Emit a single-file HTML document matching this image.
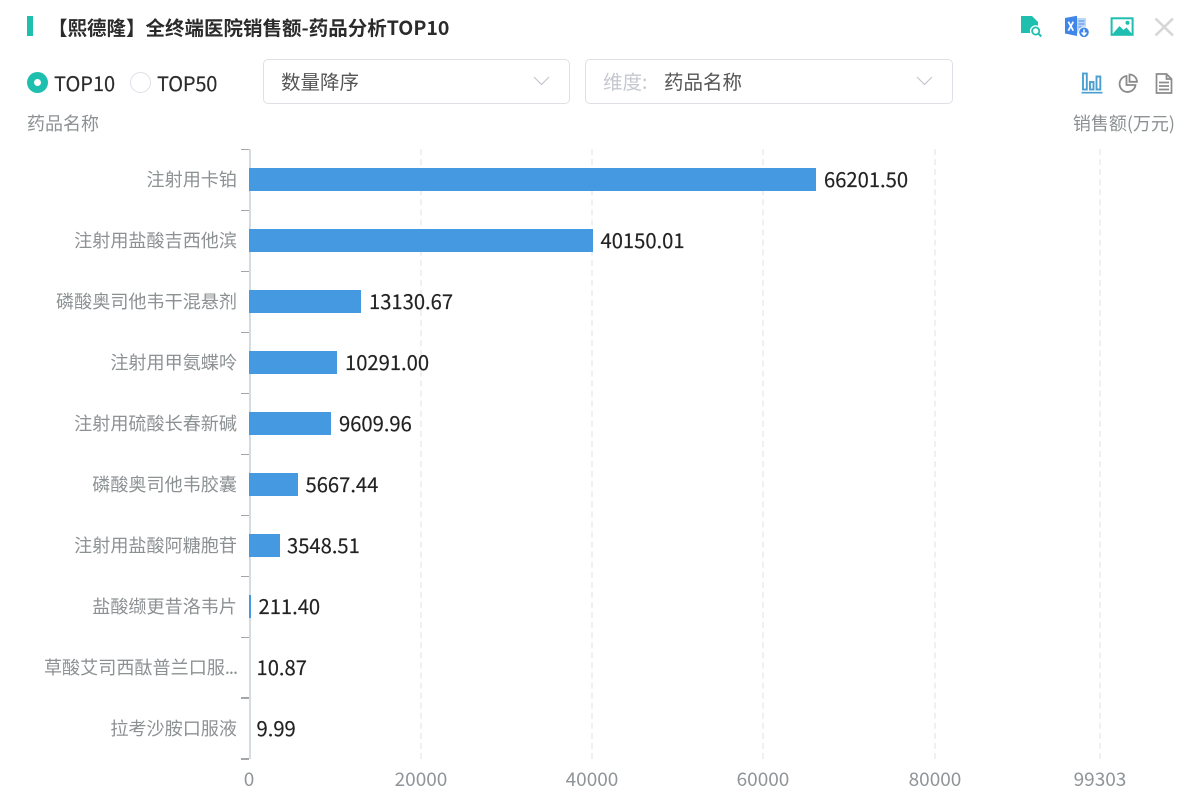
<!DOCTYPE html>
<html><head><meta charset="utf-8">
<style>
html,body{margin:0;padding:0;background:#fff}
#p{position:relative;width:1188px;height:804px;overflow:hidden;background:#fff;font-family:"Noto Sans CJK SC","Liberation Sans",sans-serif}
.t{position:absolute;white-space:nowrap;line-height:28px;height:28px}
.l{font-size:18.1px;color:#8c9193;right:951px;text-align:right}
.v{font-size:20.2px;color:#222;-webkit-text-stroke:.15px #222}
.a{font-size:19px;color:#8e9497;top:765px;text-align:center;width:80px}
.b{position:absolute;left:249px;height:22.5px;background:#4499e0}
.g{position:absolute;top:149px;height:610px;width:0;border-left:2px dashed #eef1f3}
.k{position:absolute;left:241px;width:8px;height:1.5px;background:#a3a5a6}
.s{position:absolute;background:#fff;border:1px solid #dfe0e6;border-radius:5px;box-sizing:border-box;top:59px;height:45px}
svg{position:absolute;overflow:visible}
</style></head><body><div id="p">
<div style="position:absolute;left:27px;top:16px;width:6px;height:20px;background:#1fbfb0"></div>
<div class="t" style="left:48px;top:12.500px;font-size:19.5px;font-weight:700;color:#2b2b2b">【熙德隆】全终端医院销售额-药品分析TOP10</div>

<svg style="left:1020px;top:15px" width="24" height="24" viewBox="0 0 24 24"><path d="M1 1h11l6 6v11H1z" fill="#1fbfb0"/><circle cx="15.700" cy="16" r="5.800" fill="#fff"/><circle cx="15.700" cy="16" r="3.600" fill="none" stroke="#1fbfb0" stroke-width="1.800"/><path d="M18.300 18.500l3 3" stroke="#1fbfb0" stroke-width="2"/></svg>
<svg style="left:1064px;top:15px" width="26" height="24" viewBox="0 0 26 24"><path d="M1 3L13 .7V21L1 18.500z" fill="#3f86e8"/><path d="M13 3h9v15h-9z" fill="#bcd6f7"/><path d="M14.500 6h6M14.500 9h6M14.500 12h6M14.500 15h4" stroke="#4a8fe8" stroke-width="1"/><path d="M4.300 6.700l5 9M9.300 6.700l-5 9" stroke="#fff" stroke-width="1.700"/><circle cx="20" cy="17.300" r="5.300" fill="#3f86e8" stroke="#fff" stroke-width="1"/><path d="M20 14.300v5.500M17.600 17.500l2.400 2.600 2.400-2.600" stroke="#fff" stroke-width="1.500" fill="none"/></svg>
<svg style="left:1110px;top:17px" width="24" height="20" viewBox="0 0 24 20"><rect x="1.600" y="1.300" width="21" height="16.500" fill="#fff" stroke="#1fbfb0" stroke-width="2"/><path d="M2.500 17l7-8 4 4 3-2.500 5.500 6.500z" fill="#1fbfb0"/><circle cx="17.500" cy="5.800" r="2" fill="#1fbfb0"/></svg>
<svg style="left:1154px;top:17px" width="20" height="20" viewBox="0 0 20 20"><path d="M1.500 1.500l17.500 17M19 1.500L1.500 18.500" stroke="#d6d6d6" stroke-width="2.600"/></svg>

<div style="position:absolute;left:27px;top:72px;width:21px;height:21px;border-radius:50%;background:#1fbfb0"></div>
<div style="position:absolute;left:34px;top:79px;width:7px;height:7px;border-radius:50%;background:#fff"></div>
<div class="t" style="left:54px;top:69px;font-size:20px;color:#2b2b2b;-webkit-text-stroke:.15px #2b2b2b">TOP10</div>
<div style="position:absolute;left:130px;top:72px;width:21px;height:21px;border-radius:50%;border:1px solid #dfe0e8;box-sizing:border-box"></div>
<div class="t" style="left:157px;top:69px;font-size:20px;letter-spacing:-.2px;color:#2b2b2b;-webkit-text-stroke:.15px #2b2b2b">TOP50</div>

<div class="s" style="left:263px;width:307px"></div>
<div class="t" style="left:281px;top:66.500px;font-size:19.5px;color:#555">数量降序</div>
<svg style="left:533px;top:76px" width="17" height="10" viewBox="0 0 17 10"><path d="M1 1l7.500 7.500L16 1" fill="none" stroke="#c4c7cf" stroke-width="1.200"/></svg>
<div class="s" style="left:585px;width:368px"></div>
<div class="t" style="left:603px;top:66.500px;font-size:19.5px;color:#c5c8d0">维度:</div>
<div class="t" style="left:664px;top:66.500px;font-size:19.5px;color:#555">药品名称</div>
<svg style="left:916px;top:76px" width="17" height="10" viewBox="0 0 17 10"><path d="M1 1l7.500 7.500L16 1" fill="none" stroke="#c4c7cf" stroke-width="1.200"/></svg>

<svg style="left:1080px;top:70px" width="24" height="24" viewBox="0 0 24 24"><g fill="none" stroke="#4a9fd0" stroke-width="1.900"><rect x="3" y="3.500" width="3.800" height="16"/><rect x="10" y="12" width="3.500" height="7.500"/><rect x="16.500" y="6.500" width="3.800" height="13"/></g><path d="M1.500 22.700h21" stroke="#4a9fd0" stroke-width="1.600"/></svg>
<svg style="left:1118px;top:73px" width="20" height="20" viewBox="0 0 20 20"><g fill="none" stroke="#8b8b8b" stroke-width="1.800"><path d="M8.500 3a8 8 0 1 0 9 9h-9z"/><path d="M11.500 1.500v7.300H19A7.500 7.500 0 0 0 11.500 1.500z"/></g></svg>
<svg style="left:1155px;top:73px" width="18" height="21" viewBox="0 0 18 21"><g fill="none" stroke="#8b8b8b" stroke-width="1.700"><path d="M1.500 1h10l5 5v14h-15z"/><path d="M11.500 1v5h5M4 9.500h10M4 13h10M4 16.500h10"/></g></svg>

<div class="t" style="left:27px;top:109px;font-size:18px;color:#8c9193">药品名称</div>
<div class="t" style="right:13px;top:109px;font-size:18px;color:#8c9193">销售额(万元)</div>

<div class="g" style="left:420px"></div><div class="g" style="left:591px"></div><div class="g" style="left:762px"></div><div class="g" style="left:934px"></div><div class="g" style="left:1099px"></div>
<div style="position:absolute;left:249px;top:149px;width:1.500px;height:610px;background:#d5dcdf"></div>
<div class="k" style="top:148.500px"></div><div class="k" style="top:209.500px"></div><div class="k" style="top:270.500px"></div><div class="k" style="top:331.500px"></div><div class="k" style="top:392.500px"></div><div class="k" style="top:453.500px"></div><div class="k" style="top:514.500px"></div><div class="k" style="top:575.500px"></div><div class="k" style="top:636.500px"></div><div class="k" style="top:697px"></div><div class="k" style="top:758px"></div>

<div class="b" style="top:168px;width:567px"></div>
<div class="b" style="top:229px;width:344px"></div>
<div class="b" style="top:290px;width:112px"></div>
<div class="b" style="top:351px;width:88px"></div>
<div class="b" style="top:412px;width:82px"></div>
<div class="b" style="top:473px;width:48.500px"></div>
<div class="b" style="top:534px;width:30.500px"></div>
<div class="b" style="top:595px;width:2px"></div>

<div class="t l" style="top:165px">注射用卡铂</div>
<div class="t l" style="top:226px">注射用盐酸吉西他滨</div>
<div class="t l" style="top:287px">磷酸奥司他韦干混悬剂</div>
<div class="t l" style="top:348px">注射用甲氨蝶呤</div>
<div class="t l" style="top:409px">注射用硫酸长春新碱</div>
<div class="t l" style="top:470px">磷酸奥司他韦胶囊</div>
<div class="t l" style="top:531px">注射用盐酸阿糖胞苷</div>
<div class="t l" style="top:592px">盐酸缬更昔洛韦片</div>
<div class="t l" style="top:653px">草酸艾司西酞普兰口服<span style="letter-spacing:-1px">...</span></div>
<div class="t l" style="top:714px">拉考沙胺口服液</div>

<div class="t v" style="left:824px;top:165px">66201.50</div>
<div class="t v" style="left:600.500px;top:226px">40150.01</div>
<div class="t v" style="left:369px;top:287px">13130.67</div>
<div class="t v" style="left:345px;top:348px">10291.00</div>
<div class="t v" style="left:339px;top:409px">9609.96</div>
<div class="t v" style="left:305.500px;top:470px">5667.44</div>
<div class="t v" style="left:287px;top:531px">3548.51</div>
<div class="t v" style="left:258.500px;top:592px">211.40</div>
<div class="t v" style="left:256.500px;top:653px">10.87</div>
<div class="t v" style="left:256.500px;top:714px">9.99</div>

<div class="t a" style="left:209px">0</div>
<div class="t a" style="left:381px">20000</div>
<div class="t a" style="left:552px">40000</div>
<div class="t a" style="left:723px">60000</div>
<div class="t a" style="left:895px">80000</div>
<div class="t a" style="left:1060px">99303</div>
</div></body></html>
